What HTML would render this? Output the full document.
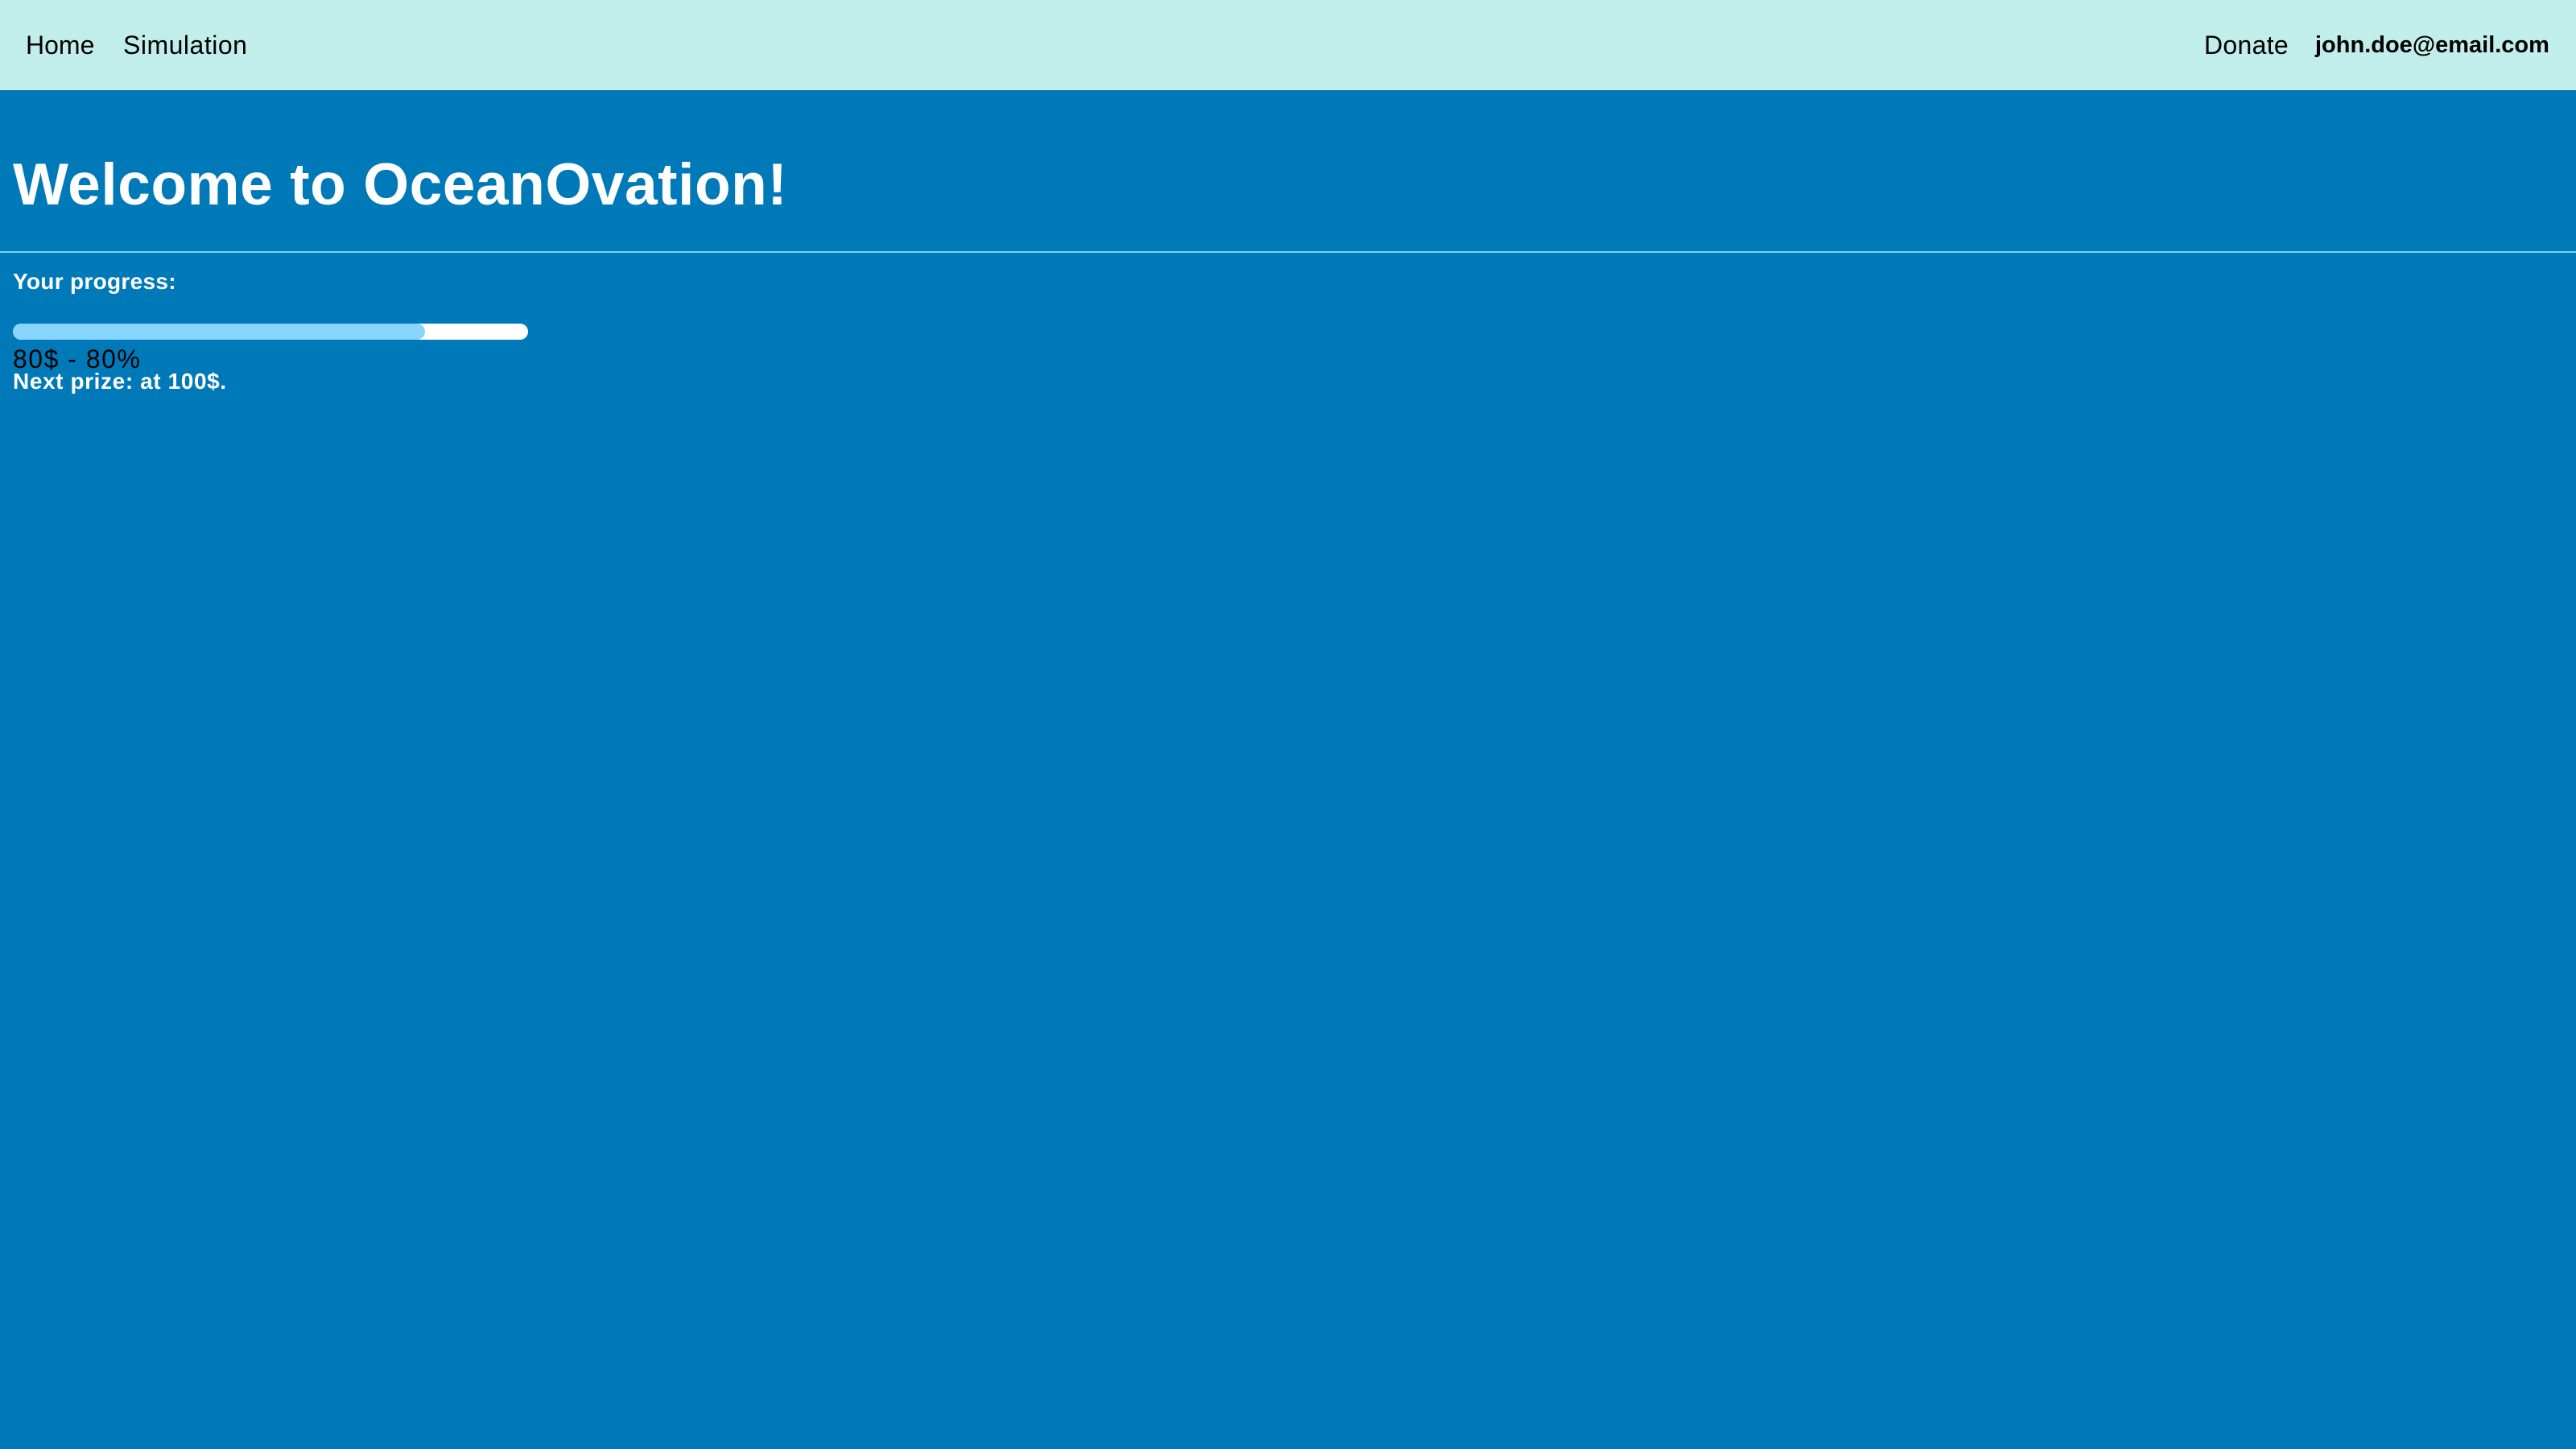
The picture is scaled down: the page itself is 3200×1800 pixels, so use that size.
<!DOCTYPE html>
<html><head><meta charset="utf-8"><style>
html,body{margin:0;padding:0;}
body{width:3200px;height:1800px;background:#0079b9;font-family:"Liberation Sans",Arial,sans-serif;overflow:hidden;position:relative;}
nav{position:absolute;left:0;top:0;width:3200px;height:112px;background:#c1eeea;}
nav span{position:absolute;top:36px;font-size:32px;line-height:40px;color:#000;}
.t{position:absolute;left:16px;white-space:nowrap;}
</style></head><body>
<nav>
<span style="left:32px">Home</span>
<span style="left:153px;letter-spacing:0.5px">Simulation</span>
<span style="left:2738px;letter-spacing:0.3px">Donate</span>
<span style="left:2876px;font-weight:bold;font-size:29px">john.doe@email.com</span>
</nav>
<div class="t" style="top:180px;font-size:73px;line-height:100px;font-weight:bold;color:#fff;letter-spacing:0.6px">Welcome to OceanOvation!</div>
<div style="position:absolute;left:0;top:312px;width:3200px;height:2px;background:#7fd0f5"></div>
<div class="t" style="top:332px;font-size:28px;line-height:36px;font-weight:bold;color:#fff;letter-spacing:0.3px">Your progress:</div>
<div style="position:absolute;left:16px;top:402px;width:640px;height:20px;background:#fff;border-radius:10px;overflow:hidden">
<div style="width:512px;height:20px;background:#87d5fd;border-radius:10px"></div></div>
<div class="t" style="top:426px;font-size:32px;line-height:40px;color:#000;letter-spacing:1.5px">80$ - 80%</div>
<div class="t" style="top:456px;font-size:28px;line-height:36px;font-weight:bold;color:#fff;letter-spacing:0.6px">Next prize: at 100$.</div>
</body></html>
